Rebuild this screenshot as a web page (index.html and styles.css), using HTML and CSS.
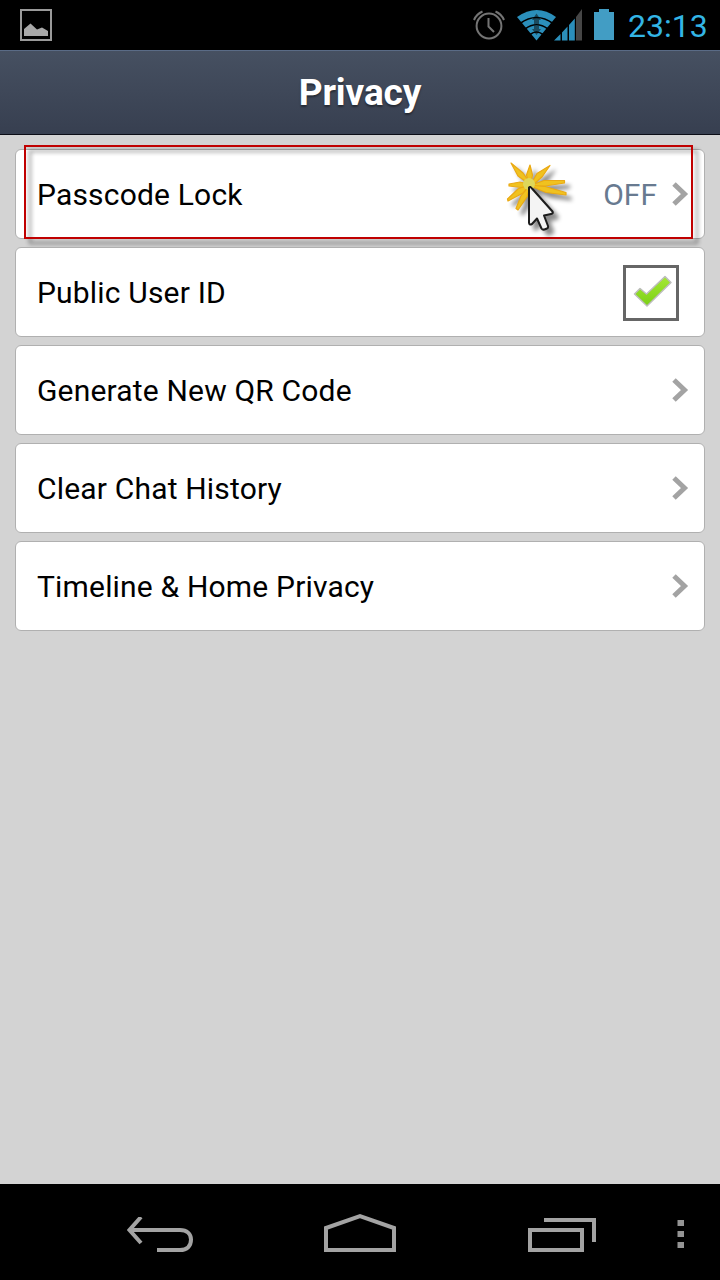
FILE: index.html
```
<!DOCTYPE html>
<html lang="en">
<head>
  <meta charset="UTF-8">
  <meta name="viewport" content="width=device-width, initial-scale=1.0">
  <title>Privacy</title>
  <link rel="stylesheet" href="styles.css">
</head>
<body>

  <div class="phone">

    <!-- Status bar -->
    <div class="status-bar">
      <svg class="icon-picture" width="34" height="34" viewBox="0 0 34 34">
        <rect x="2" y="2" width="30" height="30" fill="none" stroke="#9a9a9a" stroke-width="2"/>
        <path d="M5 28V21L11.5 15.500L18 21.500L23 19.500L29 23V28Z" fill="#a8a8a8"/>
      </svg>
      <div class="status-right">
        <svg class="icon-alarm" width="32" height="32" viewBox="0 0 32 32" fill="none" stroke="#747474" stroke-width="2">
          <circle cx="16" cy="17" r="12.4"/>
          <path d="M15.500 9V17.500L21 23M1 11Q3.500 5 9.500 2.500M31 11Q28.500 5 22.500 2.500"/>
        </svg>
        <svg class="icon-wifi" width="40" height="32" viewBox="0 0 40 32">
          <path d="M0 8Q20-6 39 8L19.500 31.500Z" fill="#2b8fbb"/>
          <path d="M19.500 4.500L24 11H22V15H17V11H15ZM17 17H22V20H24L19.500 26L15 20H17Z" fill="#1b4b60"/>
          <g fill="none" stroke="#000" stroke-width="1.600">
            <path d="M3 14.500Q19.500 2.500 36 14.500M8 20Q19.500 11.500 31 20M13 25.500Q19.500 20.500 26 25.500"/>
          </g>
        </svg>
        <svg class="icon-signal" width="29" height="33" viewBox="0 0 29 33">
          <path d="M0 31.500L6.500 25V31.500ZM8 31.500V23.500L13.500 17.500V31.500ZM15 31.500V16L20.800 9.500V31.500Z" fill="#2b8fbb"/>
          <path d="M22 31.500V8L28 0V31.500Z" fill="#464646"/>
        </svg>
        <svg class="icon-battery" width="20" height="31" viewBox="0 0 20 31">
          <path d="M0 3H5V0H15V3H20V31H0Z" fill="#429dc4"/>
        </svg>
        <span class="clock">23:13</span>
      </div>
    </div>

    <!-- Header -->
    <header>
      <h1>Privacy</h1>
    </header>

    <!-- Settings list -->
    <main class="list">
      <div class="row">
        <span class="label">Passcode Lock</span>
        <span class="value">OFF</span>
        <svg class="arrow" width="18" height="26" viewBox="0 0 18 26"><path d="M3 3L13.500 13L3 23"/></svg>
        <div class="highlight"></div>
        <svg class="pointer" width="80" height="84" viewBox="0 0 80 84">
          <g class="burst">
            <path d="M13 8L25 18L34 31L20 21Z"/>
            <path d="M32 10L34.500 20L32 33L28.500 20Z"/>
            <path d="M52 10.500L44 22L31 33L39 18.500Z"/>
            <path d="M66.500 25.500V28L47 31L31 31L46 25.500Z"/>
            <path d="M68 37.500V40L48 37.500L30 30L47 31.500Z"/>
            <path d="M20 55L18 53.500L23 41L33 28L29 42Z"/>
            <path d="M10 46L9.500 44L20 34L34 28L25 38Z"/>
            <path d="M11 31V29L22 27L34 30L23 32.500Z"/>
          </g>
          <circle class="burst-core" cx="31" cy="29" r="6"/>
          <path class="cursor" d="M31 32.500Q32 31 34 33.500L54.500 56.500Q55.500 58.500 53 59L46 60.500L50 71Q50.500 73 49 73.500L46.500 74.500Q44.500 75 43.500 73.500L39 63.500L34 69Q31 70.500 31 67.500Z"/>
        </svg>
      </div>
      <div class="row">
        <span class="label">Public User ID</span>
        <span class="checkbox">
          <svg width="50" height="50" viewBox="0 0 50 50">
            <defs>
              <linearGradient id="green" x1="0" y1="0" x2="0" y2="1">
                <stop offset="0" stop-color="#a5e835"/>
                <stop offset="1" stop-color="#7bd016"/>
              </linearGradient>
            </defs>
            <path d="M8.500 26L14 20.500L20.500 26L39 8.500L45 14.500L21 38Z" fill="url(#green)" stroke="#bdbdbd" stroke-width="1.500" stroke-linejoin="round"/>
          </svg>
        </span>
      </div>
      <div class="row">
        <span class="label">Generate New QR Code</span>
        <svg class="arrow" width="18" height="26" viewBox="0 0 18 26"><path d="M3 3L13.500 13L3 23"/></svg>
      </div>
      <div class="row">
        <span class="label">Clear Chat History</span>
        <svg class="arrow" width="18" height="26" viewBox="0 0 18 26"><path d="M3 3L13.500 13L3 23"/></svg>
      </div>
      <div class="row">
        <span class="label">Timeline &amp; Home Privacy</span>
        <svg class="arrow" width="18" height="26" viewBox="0 0 18 26"><path d="M3 3L13.500 13L3 23"/></svg>
      </div>
    </main>

    <!-- Navigation bar -->
    <nav class="nav-bar">
      <svg class="nav-back" width="66" height="36" viewBox="0 0 66 36">
        <path d="M4 13H53C60 13 64 17 64 22.500C64 29 60 33 53 33H30M14 0L2.500 13L14 26"/>
      </svg>
      <svg class="nav-home" width="72" height="40" viewBox="0 0 72 40">
        <path d="M2 37V15L36 3L70 15V37Z"/>
      </svg>
      <svg class="nav-recent" width="68" height="36" viewBox="0 0 68 36">
        <path d="M2 13H54V33H2ZM16 3H66V25"/>
      </svg>
      <svg class="nav-menu" width="8" height="30" viewBox="0 0 8 30">
        <path d="M0.500 1H7V7H0.500ZM0.500 12H7V18H0.500ZM0.500 23H7V29H0.500Z"/>
      </svg>
    </nav>

  </div>

</body>
</html>
```
FILE: styles.css
```
* {
  box-sizing: border-box;
}

body {
  margin: 0;
  font-family: Roboto, "Liberation Sans", sans-serif;
  background-color: #000;
}

svg {
  display: block;
  flex-shrink: 0;
}

.phone {
  display: flex;
  flex-direction: column;
  width: 720px;
  height: 1280px;
  background-color: #d3d3d3;
}

/* Status bar */
.status-bar {
  display: flex;
  justify-content: space-between;
  height: 50px;
  padding: 8px 12px 0 19px;
  background-color: #000;
}

.status-right {
  display: flex;
  align-items: flex-start;
}

.icon-alarm {
  margin-top: 1px;
}

.icon-wifi {
  margin: 1px 0 0 12px;
}

.icon-signal {
  margin: 1px 0 0 -3px;
}

.icon-battery {
  margin: 1px 14px 0 11px;
}

.clock {
  width: 80px;
  font-size: 32px;
  line-height: 36px;
  color: #33b5e5;
}

/* Header */
header {
  display: flex;
  align-items: center;
  justify-content: center;
  height: 85px;
  border-top: 1px solid #5a6b86;
  border-bottom: 1px solid #0b0d16;
  background: linear-gradient(#465061, #373f50);
}

header h1 {
  margin: 0;
  font-size: 37px;
  font-weight: 700;
  letter-spacing: -0.1px;
  color: #fff;
  text-shadow: 0 2px 2px rgba(0, 0, 0, 0.4);
}

/* List */
.list {
  display: flex;
  flex: 1;
  flex-direction: column;
  gap: 8px;
  padding: 14px 15px;
}

.row {
  position: relative;
  display: flex;
  align-items: center;
  height: 90px;
  padding: 0 15px 0 21px;
  background-color: #fff;
  border: 1px solid #b0b0b0;
  border-radius: 6px;
}

.label {
  flex: 1;
  font-size: 30px;
  letter-spacing: 0.18px;
  color: #000;
}

.value {
  margin-right: 14px;
  font-size: 30px;
  color: #687a90;
}

.arrow path {
  fill: none;
  stroke: #a3a3a3;
  stroke-width: 5;
}

.checkbox {
  width: 56px;
  height: 56px;
  margin: 2px 10px 0 0;
  border: 3px solid #666;
}

/* Red frame over the first row */
.highlight {
  position: absolute;
  top: -5px;
  left: 8px;
  width: 669px;
  height: 94px;
  border: 2px solid #c00000;
  filter: drop-shadow(5px 5px 2px rgba(0, 0, 0, 0.45));
}

.pointer {
  position: absolute;
  top: 5px;
  left: 482px;
  filter: drop-shadow(5px 5px 2px rgba(0, 0, 0, 0.45));
}

.burst {
  fill: #f0c21f;
  stroke: #eaa914;
  stroke-width: 1.2;
  stroke-linejoin: round;
}

.burst-core {
  fill: #dfd75a;
}

.cursor {
  fill: #f4f4f4;
  stroke: #1c1c1c;
  stroke-width: 2;
  stroke-linejoin: round;
}

/* Navigation bar */
.nav-bar {
  display: flex;
  align-items: flex-start;
  height: 96px;
  padding: 30px 0 0 127px;
  background-color: #000;
}

.nav-bar path {
  fill: none;
  stroke: #a3a3a3;
  stroke-width: 4;
}

.nav-back {
  margin-top: 3px;
}

.nav-home {
  margin-left: 131px;
  margin-top: -1px;
}

.nav-recent {
  margin: 3px 0 0 132px;
}

.nav-menu {
  margin: 5px 0 0 81px;
}

.nav-menu path {
  fill: #949494;
  stroke: none;
}
```
